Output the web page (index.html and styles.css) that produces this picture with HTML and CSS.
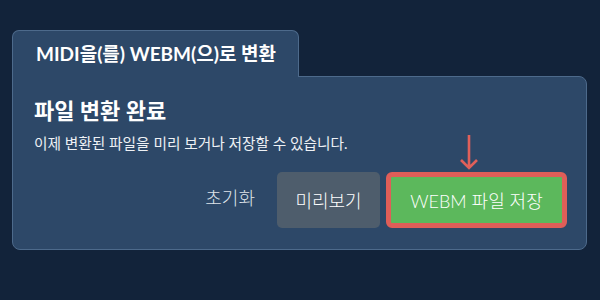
FILE: index.html
```html
<!DOCTYPE html>
<html lang="ko">
<head>
    <meta charset="UTF-8">
    <title>MIDI을(를) WEBM(으)로 변환</title>
    <link rel="stylesheet" href="styles.css">
</head>
<body>
<div id="converter">
    <div class="card-tab">MIDI을(를) WEBM(으)로 변환</div>
    <div class="card-panel">
        <h2 class="done-title">파일 변환 완료</h2>
        <p class="done-desc">이제 변환된 파일을 미리 보거나 저장할 수 있습니다.</p>
        <div class="btn-row">
            <button class="btn btn-link">초기화</button>
            <button class="btn btn-gray">미리보기</button>
            <div class="save-wrap">
                <!-- 저장 버튼을 가리키는 화살표 -->
                <svg class="save-arrow" width="20" height="36" viewBox="0 0 20 36">
                    <path d="M10 1 L10 34 M2 26 L10 34 L18 26" fill="none" stroke="#e0605a" stroke-width="2.6"/>
                </svg>
                <button class="btn btn-green">WEBM 파일 저장</button>
            </div>
        </div>
    </div>
</div>
</body>
</html>
```

FILE: styles.css
```css
*{
    margin: 0;
    padding: 0;
    box-sizing: border-box;
}
body{
    background: #12233a;
    font-family: Lato, "Noto Sans CJK KR", sans-serif;
    color: #fff;
}
#converter{
    width: 575px;
    margin: 30px 0 0 12px;
}
.card-tab{
    position: relative;
    z-index: 1;
    width: 287px;
    height: 47px;
    margin-bottom: -1px;
    padding: 10px 0 0 23px;
    background: #2d4868;
    border: 1px solid #4d6a8b;
    border-bottom: none;
    border-radius: 7px 7px 0 0;
    font-size: 19px;
    font-weight: 700;
    line-height: 26px;
}
.card-panel{
    height: 174px;
    padding: 20px 19px 0 21px;
    background: #2d4868;
    border: 1px solid #4d6a8b;
    border-radius: 0 8px 8px 8px;
}
.done-title{
    font-size: 22px;
    font-weight: 700;
    line-height: 28px;
}
.done-desc{
    margin-top: 8px;
    font-size: 14.7px;
    line-height: 20px;
    color: #eef1f5;
}
.btn-row{
    display: flex;
    justify-content: flex-end;
    align-items: center;
    margin-top: 19px;
}
.btn{
    font-family: Lato, "Noto Sans CJK KR", sans-serif;
    font-size: 18px;
    font-weight: 300;
    color: #fff;
    border: none;
    border-radius: 5px;
    height: 56px;
}
.btn-link{
    background: none;
    color: #dfe4ea;
    padding: 0 22px 6px 0;
}
.btn-gray{
    width: 103px;
    background: #4e5d6c;
}
.save-wrap{
    position: relative;
    margin-left: 6px;
}
.save-arrow{
    position: absolute;
    left: 73px;
    top: -38px;
}
.btn-green{
    width: 181px;
    background: #5cb85c;
    border: 5px solid #df5e58;
    border-radius: 6px;
}
```
